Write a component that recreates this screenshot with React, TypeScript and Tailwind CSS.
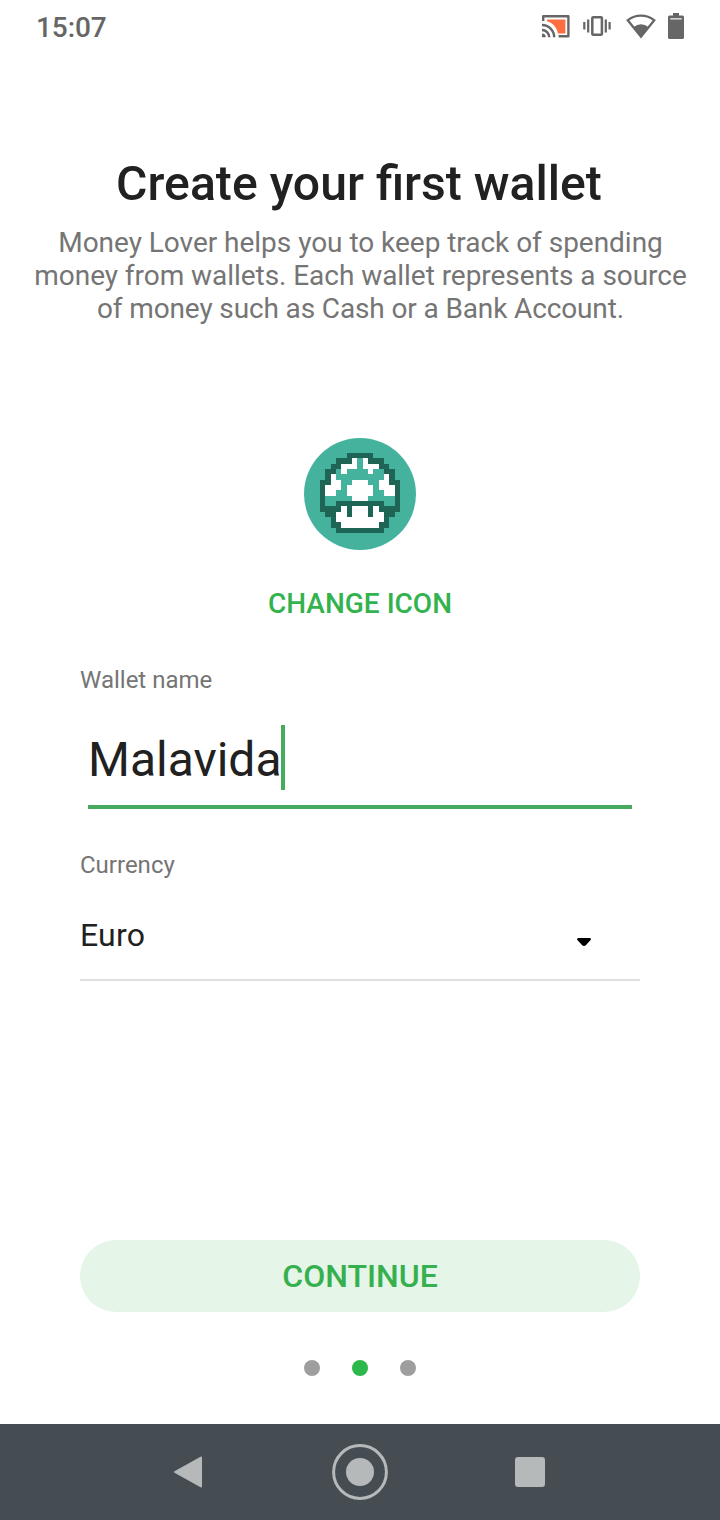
// Mushroom sprite: # outline, W white, . transparent
const MUSHROOM = [
  ".....#####.....",
  "...###W.W###...",
  "..##WWW.WWW##..",
  ".##.W....W..##.",
  ".#W.........W#.",
  "##WW..WWW..WW##",
  "#WWW.WWWWW.WWW#",
  "#WW..WWWWW..WW#",
  "#.....WWW.....#",
  "#..#########..#",
  "####W#WWW#W####",
  ".##WW#WWW#WW##.",
  "..#WWWWWWWWW#..",
  "..##WWWWWWW##..",
  "...#########...",
];

function WalletIcon() {
  return (
    <div className="w-28 h-28 rounded-full bg-[#45b29d] flex items-center justify-center">
      <svg className="w-20 h-20 mb-0.5" viewBox="0 0 15 15" shapeRendering="crispEdges">
        {MUSHROOM.map((row, y) =>
          row.split("").map((cell, x) =>
            cell === "." ? null : (
              <rect key={`${x}-${y}`} x={x} y={y} width={1} height={1} fill={cell === "#" ? "#1f6556" : "#ffffff"} />
            )
          )
        )}
      </svg>
    </div>
  );
}

function StatusBar() {
  return (
    <header className="h-[52px] pl-9 flex items-center justify-between text-[#666666]">
      <span className="text-[28px] leading-8 font-medium pt-[3px] tracking-[-0.1px]">15:07</span>
      <svg className="w-[180px] h-[52px]" viewBox="540 0 180 52" fill="none" stroke="currentColor">
        {/* Cast */}
        <path d="M543.2 21v-4.8h25.2v20h-9.800" strokeWidth="2.4" strokeLinejoin="round" />
        <path d="M547 19.500h18.400v14h-7.400c-1.200-6-5-10.600-11-12.300z" fill="#ff6e40" stroke="none" />
        <path d="M542 25a12.2 12.2 0 0 1 12.2 12.2M542 30a7.2 7.2 0 0 1 7.2 7.2" strokeWidth="2.4" />
        <path d="M542 33.5a3.8 3.8 0 0 1 3.8 3.8H542z" fill="currentColor" stroke="none" />
        {/* Vibrate */}
        <rect x="592.3" y="17.2" width="9.6" height="17.6" rx="1" strokeWidth="2.5" />
        <path d="M588.2 19.5v13M584.3 22v7.5M605.8 19.5v13M609.6 22v7.5" strokeWidth="2.2" />
        {/* Wifi */}
        <path d="M627.7 20.3a21.5 21.5 0 0 1 26.6 0L641 36.6z" strokeWidth="2.3" />
        <path d="M633.8 27a10.500 10.500 0 0 1 14.4 0L641 36.8z" fill="currentColor" stroke="none" />
        {/* Battery */}
        <path d="M673 13h6v2.6h3.5a1.5 1.5 0 0 1 1.5 1.5v20.4a1.5 1.5 0 0 1-1.5 1.5h-13a1.5 1.5 0 0 1-1.5-1.5V17.1a1.5 1.5 0 0 1 1.5-1.5h3.5z" fill="currentColor" stroke="none" />
        <path d="M670.3 18.8h11.4" stroke="#d4d4d4" strokeWidth="1.6" />
      </svg>
    </header>
  );
}

function NavigationBar() {
  return (
    <nav className="h-24 bg-[#454d52] flex items-center pl-[172px] text-[#b5b9b9]">
      <button type="button" aria-label="Back">
        <svg className="w-8 h-8" viewBox="0 0 32 32" fill="currentColor">
          <path d="M3 16L29 1.500v29z" stroke="currentColor" strokeWidth="2" strokeLinejoin="round" />
        </svg>
      </button>
      <button type="button" aria-label="Home" className="ml-32">
        <svg className="w-14 h-14" viewBox="0 0 56 56" fill="currentColor">
          <circle cx="28" cy="28" r="26.4" fill="none" stroke="currentColor" strokeWidth="3" />
          <circle cx="28" cy="28" r="14" />
        </svg>
      </button>
      <button type="button" aria-label="Recents" className="ml-[127px] w-[30px] h-[30px] rounded-[3px] bg-[#b5b9b9]" />
    </nav>
  );
}

export default function App() {
  return (
    <div className="w-[720px] h-[1520px] bg-white flex flex-col overflow-hidden font-['Roboto',sans-serif] text-[#212121]">
      <StatusBar />

      <main className="flex-1 flex flex-col items-center">
        {/* Intro */}
        <h1 className="mt-[104px] mr-[2px] text-[48.15px] leading-[56px] font-medium whitespace-nowrap">
          Create your first wallet
        </h1>
        <p className="mt-[14px] ml-px text-[28px] leading-[33px] text-center text-[#757575] whitespace-nowrap">
          <span className="block tracking-[-0.03px]">Money Lover helps you to keep track of spending</span>
          <span className="block tracking-[-0.05px]">money from wallets. Each wallet represents a source</span>
          <span className="block tracking-[-0.13px]">of money such as Cash or a Bank Account.</span>
        </p>

        {/* Icon picker */}
        <div className="mt-[113px]">
          <WalletIcon />
        </div>
        <button type="button" className="mt-[37px] text-[28px] leading-[33px] font-medium text-[#33b250]">
          CHANGE ICON
        </button>

        {/* Form */}
        <div className="mt-[46px] w-[560px] flex flex-col">
          <label className="text-[24px] leading-7 text-[#757575]">Wallet name</label>
          <div className="mx-2 mt-[31px] h-[84px] border-b-4 border-[#46aa5f] flex items-start">
            <span className="text-[48px] leading-[70px]">Malavida</span>
            <span className="-ml-px w-1 h-[65px] bg-[#46aa5f]" />
          </div>

          <label className="mt-[42px] text-[24px] leading-7 text-[#757575]">Currency</label>
          <div className="mt-[37px] h-[65px] border-b-2 border-[#e0e0e0] flex items-start justify-between pr-12">
            <span className="text-[32px] leading-[38px] tracking-[0.2px]">Euro</span>
            <svg className="w-4 h-[10px] mt-[21px]" viewBox="0 0 16 10">
              <path d="M2.2 2.2h11.6L9 7.4a1.4 1.4 0 0 1-2 0z" fill="#000" stroke="#000" strokeWidth="2.2" strokeLinejoin="round" />
            </svg>
          </div>
        </div>

        <button
          type="button"
          className="mt-[259px] w-[560px] h-[72px] rounded-full bg-[#e5f5e8] text-[32px] font-medium text-[#36b04f]"
        >
          CONTINUE
        </button>

        {/* Page dots */}
        <div className="mt-12 flex gap-8">
          <span className="w-4 h-4 rounded-full bg-[#9e9e9e]" />
          <span className="w-4 h-4 rounded-full bg-[#2db84c]" />
          <span className="w-4 h-4 rounded-full bg-[#9e9e9e]" />
        </div>
      </main>

      <NavigationBar />
    </div>
  );
}
